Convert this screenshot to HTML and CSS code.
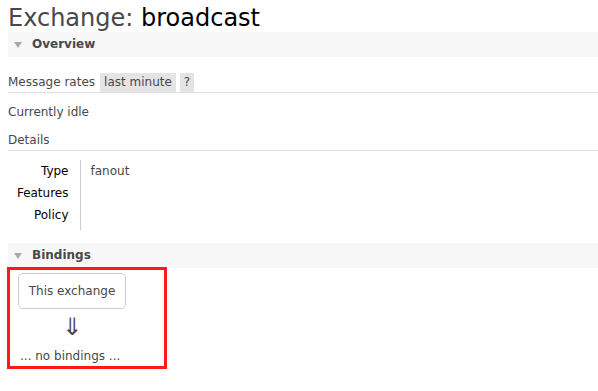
FILE: index.html
```html
<!DOCTYPE html>
<html lang="en">
<head>
  <meta charset="UTF-8">
  <title>RabbitMQ Management</title>
  <link rel="stylesheet" href="styles.css">
</head>
<body>
  <div class="main">
    <h1>Exchange: <b>broadcast</b></h1>

    <div class="section">
      <h2><span class="toggle"></span>Overview</h2>
      <div class="hider">
        <div class="rates-row">
          Message rates
          <span class="pill">last minute</span>
          <span class="pill help">?</span>
        </div>
        <p class="idle">Currently idle</p>
        <h3>Details</h3>
        <table class="facts">
          <tr><th>Type</th><td>fanout</td></tr>
          <tr><th>Features</th><td></td></tr>
          <tr><th>Policy</th><td class="last"></td></tr>
        </table>
      </div>
    </div>

    <div class="section">
      <h2><span class="toggle"></span>Bindings</h2>
      <div class="bindings">
        <div class="this-exchange">This exchange</div>
        <div class="arrow">&#8659;</div>
        <p class="none">... no bindings ...</p>
      </div>
    </div>
  </div>
</body>
</html>
```

FILE: styles.css
```css
* {
  box-sizing: border-box;
}

body {
  margin: 0;
  font-family: 'DejaVu Sans', Verdana, sans-serif;
  font-size: 12px;
  color: #484848;
  background: #fff;
}

.main {
  margin-left: 8px;
  padding-top: 5px;
}

h1 {
  margin: 0;
  font-size: 24px;
  font-weight: normal;
  line-height: 27px;
  color: #484848;
}

h1 b {
  font-weight: normal;
  color: #000;
}

h2 {
  margin: 0;
  height: 25px;
  line-height: 25px;
  padding-left: 6px;
  background: #f7f7f7;
  font-size: 12px;
  font-weight: bold;
  color: #484848;
  display: flex;
  align-items: center;
}

.toggle {
  width: 0;
  height: 0;
  border-left: 4.5px solid transparent;
  border-right: 4.5px solid transparent;
  border-top: 6px solid #aaa;
  margin-right: 10px;
}

.rates-row {
  margin-top: 16px;
  display: flex;
  align-items: center;
  line-height: 19px;
  border-bottom: 1px solid #ddd;
}

.pill {
  background: #e4e4e4;
  padding: 0 4px;
  margin-left: 5px;
}

.pill.help {
  margin-left: 4px;
}

.idle {
  margin: 10px 0 0;
  line-height: 19px;
}

h3 {
  margin: 9px 0 0;
  font-size: 12px;
  font-weight: normal;
  line-height: 19px;
  border-bottom: 1px solid #ddd;
}

.facts {
  margin-top: 9px;
  border-collapse: collapse;
}

.facts th {
  width: 72px;
  padding: 0 11px 0 0;
  text-align: right;
  font-weight: normal;
  color: #000;
  line-height: 22px;
  vertical-align: top;
}

.facts td {
  border-left: 1px solid #ccc;
  padding: 0 0 0 10px;
  line-height: 22px;
  vertical-align: top;
}

.facts td.last {
  height: 26px;
}

.section + .section {
  margin-top: 13px;
}

.bindings {
  margin: -1px 0 0 -1px;
  width: 160px;
  border: 3px solid #ff1a1a;
  padding: 3px 0 0 8px;
}

.this-exchange {
  width: 108px;
  height: 36px;
  line-height: 34px;
  text-align: center;
  border: 1px solid #ccc;
  border-radius: 5px;
}

.arrow {
  width: 108px;
  text-align: center;
  font-size: 24px;
  line-height: 30px;
  margin-top: 3px;
  color: #484848;
}

.none {
  margin: 5px 0 0 2px;
  line-height: 19px;
}
```
